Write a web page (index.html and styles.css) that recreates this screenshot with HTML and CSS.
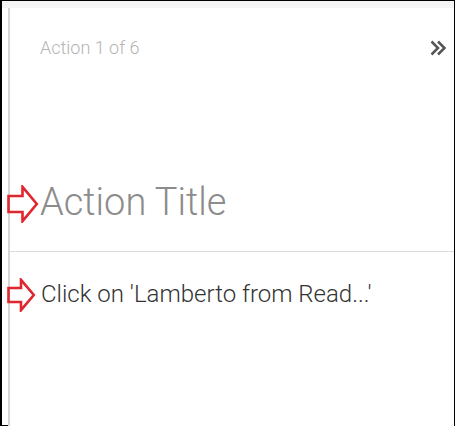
FILE: index.html
```html
<!DOCTYPE html>
<html>
<head>
<meta charset="utf-8">
<link rel="stylesheet" href="styles.css">
</head>
<body>
<div class="frame">
  <div class="strip"></div>
  <div class="main">
    <div class="gutter"></div>
    <div class="panel">
      <div class="header">
        <span class="counter">Action 1 of 6</span>
        <svg class="next" width="17" height="16" viewBox="0 0 17 16">
          <path d="M1.5 1.5 L8 8 L1.5 14.5 M8 1.5 L14.5 8 L8 14.5" fill="none" stroke="#555" stroke-width="2.5"/>
        </svg>
      </div>
      <div class="title-row">
        <h1 class="title">Action Title</h1>
      </div>
      <div class="step-row">
        <p class="step">Click on 'Lamberto from Read...'</p>
      </div>
    </div>
  </div>
  <svg class="arrow arrow-title" width="32" height="38" viewBox="0 0 32 38">
    <path d="M1.5 11 H15.5 V1.8 L29.8 19 L15.5 36.2 V27 H1.5 Z" fill="none" stroke="#e0262f" stroke-width="2.6" stroke-linejoin="miter"/>
  </svg>
  <svg class="arrow arrow-step" width="29" height="34" viewBox="0 0 29 34">
    <path d="M1.5 10 H14 V1.8 L26.8 17 L14 32.2 V24 H1.5 Z" fill="none" stroke="#e0262f" stroke-width="2.6" stroke-linejoin="miter"/>
  </svg>
</div>
</body>
</html>
```

FILE: styles.css
```css
html, body {
  margin: 0;
  padding: 0;
  background: #fff;
}

.frame {
  position: relative;
  box-sizing: border-box;
  width: 455px;
  height: 426px;
  border: 1px solid #000;
  border-left-width: 2px;
  display: flex;
  flex-direction: column;
  font-family: Roboto, "Liberation Sans", sans-serif;
}

.strip {
  height: 7px;
  background: #f5f5f5;
  flex: none;
}

.main {
  flex: 1;
  display: flex;
  min-height: 0;
}

.gutter {
  width: 6px;
  flex: none;
}

.panel {
  flex: 1;
  border-left: 2px solid #d6d6d6;
  background: #fff;
  display: flex;
  flex-direction: column;
  margin-bottom: -3px;
}

.header {
  display: flex;
  align-items: center;
  justify-content: space-between;
  padding: 28px 7px 0 30px;
  height: 24px;
}

.counter {
  font-size: 18px;
  line-height: 24px;
  font-weight: 300;
  color: #b4b4b4;
}

.next {
  display: block;
}

.title-row {
  padding: 123px 0 0 30px;
  height: 68px;
  border-bottom: 1px solid #dcdcdc;
}

.title {
  margin: 0;
  font-size: 38px;
  line-height: 38px;
  font-weight: 300;
  color: #8c8c8c;
}

.step-row {
  padding: 27px 0 0 31px;
}

.step {
  margin: 0;
  font-size: 24px;
  line-height: 30px;
  font-weight: 300;
  color: #333;
}

.arrow {
  position: absolute;
  display: block;
}

.arrow-title {
  left: 5px;
  top: 184px;
}

.arrow-step {
  left: 5px;
  top: 277px;
}
```
